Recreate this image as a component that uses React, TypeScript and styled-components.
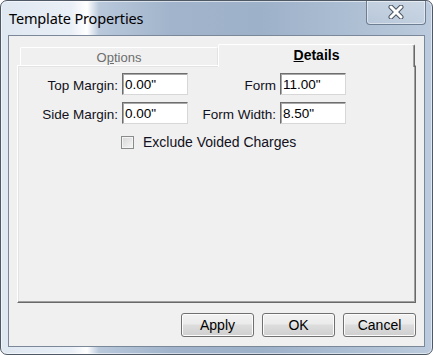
import React, { useState } from 'react';
import styled, { createGlobalStyle } from 'styled-components';

const GlobalStyle = createGlobalStyle`
  html, body {
    margin: 0;
    padding: 0;
    background: #ffffff;
  }
  body {
    font-family: "Liberation Sans", Arial, sans-serif;
  }
`;

const Window = styled.div`
  box-sizing: border-box;
  width: 433px;
  height: 355px;
  display: flex;
  flex-direction: column;
  border: 1px solid #4f5966;
  border-radius: 7px;
  overflow: hidden;
  background: linear-gradient(
    90deg,
    #dfe7f1 0px,
    #e9eff6 70px,
    #ffffff 86px,
    #b9c8db 98px,
    #a1b4cb 170px,
    #9db1c9 260px,
    #abbdd2 340px,
    #bccbdd 432px
  );
  box-shadow: inset 0 0 0 1px rgba(255, 255, 255, 0.55);
`;

const TitleBar = styled.div`
  height: 34px;
  display: flex;
  align-items: flex-start;
  justify-content: space-between;
`;

const Title = styled.div`
  font-family: "Noto Sans", "Open Sans", sans-serif;
  font-size: 14.5px;
  color: #000;
  padding: 7px 0 0 8px;
  letter-spacing: -0.15px;
`;

const CloseButton = styled.div`
  width: 58px;
  height: 24px;
  margin: -1px 6px 0 0;
  border: 1px solid #6d7d92;
  border-top: none;
  border-radius: 0 0 4px 4px;
  background: linear-gradient(180deg, rgba(255, 255, 255, 0.25), rgba(255, 255, 255, 0.1));
  box-shadow: inset 0 0 0 1px rgba(255, 255, 255, 0.45);
  display: flex;
  align-items: center;
  justify-content: center;
`;

const Client = styled.div`
  flex: 1;
  margin: 0 7px 7px 7px;
  border: 1px solid #7b8899;
  background: #f0f0f0;
  display: flex;
  flex-direction: column;
  padding: 8px 8px 9px 8px;
  gap: 10px;
`;

const TabControl = styled.div`
  flex: 1;
  display: flex;
  flex-direction: column;
`;

const TabStrip = styled.div`
  height: 21px;
  display: flex;
  align-items: flex-end;
  padding-left: 3px;
  position: relative;
  z-index: 1;
`;

const Tab = styled.div<{ active?: boolean }>`
  box-sizing: border-box;
  width: ${({ active }) => (active ? '197px' : '198px')};
  height: ${({ active }) => (active ? '23px' : '18px')};
  margin-bottom: ${({ active }) => (active ? '-2px' : '0')};
  background: #f0f0f0;
  border-top: 1px solid #ffffff;
  border-left: 1px solid #ffffff;
  border-right: 1px solid ${({ active }) => (active ? '#696969' : '#e3e3e3')};
  border-radius: 2px 2px 0 0;
  box-shadow: ${({ active }) => (active ? 'inset -1px 0 0 #a0a0a0' : 'none')};
  text-align: center;
  font-size: ${({ active }) => (active ? '14px' : '13px')};
  font-weight: ${({ active }) => (active ? 'bold' : 'normal')};
  color: ${({ active }) => (active ? '#000' : '#6d6d6d')};
  padding-top: 2px;
  cursor: default;
`;

const Mnemonic = styled.span`
  text-decoration: underline;
`;

const Panel = styled.div`
  flex: 1;
  border-top: 1px solid #ffffff;
  border-left: 1px solid #ffffff;
  border-right: 1px solid #696969;
  border-bottom: 1px solid #696969;
  box-shadow: inset -1px -1px 0 #a0a0a0, inset 1px 1px 0 #e3e3e3;
  padding: 7px 0 0 1px;
  display: flex;
  flex-direction: column;
  gap: 7px;
`;

const FieldRow = styled.div`
  display: flex;
  align-items: flex-start;
  height: 22px;
`;

const Label = styled.div<{ width: number }>`
  width: ${({ width }) => width}px;
  text-align: right;
  font-size: 13.5px;
  color: #101020;
  padding: 5px 4px 0 0;
  box-sizing: border-box;
  white-space: nowrap;
`;

const TextBox = styled.input`
  box-sizing: border-box;
  width: 66px;
  height: 22px;
  margin: 0;
  padding: 1px 2px 0 2px;
  border: 1px solid;
  border-color: #6e6e6e #d7d7d7 #d7d7d7 #6e6e6e;
  box-shadow: inset 1px 1px 0 #a8a8a8;
  background: #ffffff;
  font-family: "Liberation Sans", Arial, sans-serif;
  font-size: 13.5px;
  color: #000;
  outline: none;
`;

const CheckRow = styled.label`
  display: flex;
  align-items: center;
  gap: 9px;
  margin: 3px 0 0 102px;
  font-size: 14px;
  color: #101020;
  cursor: default;
`;

const CheckBox = styled.span`
  box-sizing: border-box;
  width: 13px;
  height: 13px;
  border: 1px solid #8a8b8b;
  background: linear-gradient(135deg, #d6d6d6 0%, #e6e6e6 50%, #f6f6f6 100%);
  box-shadow: inset 0 0 0 1px #f4f4f4;
`;

const ButtonRow = styled.div`
  display: flex;
  justify-content: flex-end;
  gap: 8px;
  height: 24px;
`;

const Button = styled.button`
  box-sizing: border-box;
  width: 73px;
  height: 24px;
  border: 1px solid #707070;
  border-radius: 3px;
  background: linear-gradient(180deg, #f2f2f2 0%, #ebebeb 45%, #dddddd 50%, #cfcfcf 100%);
  box-shadow: inset 0 0 0 1px #fcfcfc;
  font-family: "Liberation Sans", Arial, sans-serif;
  font-size: 14px;
  color: #000;
  padding: 0;
`;

const CloseGlyph = () => (
  <svg width="18" height="14" viewBox="0 0 18 14">
    <path d="M4 2 L14 12 M14 2 L4 12" stroke="#4a5563" strokeWidth="5" strokeLinecap="round" />
    <path d="M4 2 L14 12 M14 2 L4 12" stroke="#ffffff" strokeWidth="3" strokeLinecap="round" />
  </svg>
);

export default function App() {
  const [exclude, setExclude] = useState(false);

  return (
    <>
      <GlobalStyle />
      <Window>
        <TitleBar>
          <Title>Template Properties</Title>
          <CloseButton>
            <CloseGlyph />
          </CloseButton>
        </TitleBar>
        <Client>
          <TabControl>
            <TabStrip>
              <Tab>
                O<Mnemonic>p</Mnemonic>tions
              </Tab>
              <Tab active>
                <Mnemonic>D</Mnemonic>etails
              </Tab>
            </TabStrip>
            <Panel>
              <FieldRow>
                <Label width={103}>Top Margin:</Label>
                <TextBox defaultValue={'0.00"'} />
                <Label width={92}>Form</Label>
                <TextBox defaultValue={'11.00"'} />
              </FieldRow>
              <FieldRow>
                <Label width={103}>Side Margin:</Label>
                <TextBox defaultValue={'0.00"'} />
                <Label width={92}>Form Width:</Label>
                <TextBox defaultValue={'8.50"'} />
              </FieldRow>
              <CheckRow onClick={() => setExclude(!exclude)}>
                <CheckBox />
                Exclude Voided Charges
              </CheckRow>
            </Panel>
          </TabControl>
          <ButtonRow>
            <Button>Apply</Button>
            <Button>OK</Button>
            <Button>Cancel</Button>
          </ButtonRow>
        </Client>
      </Window>
    </>
  );
}
